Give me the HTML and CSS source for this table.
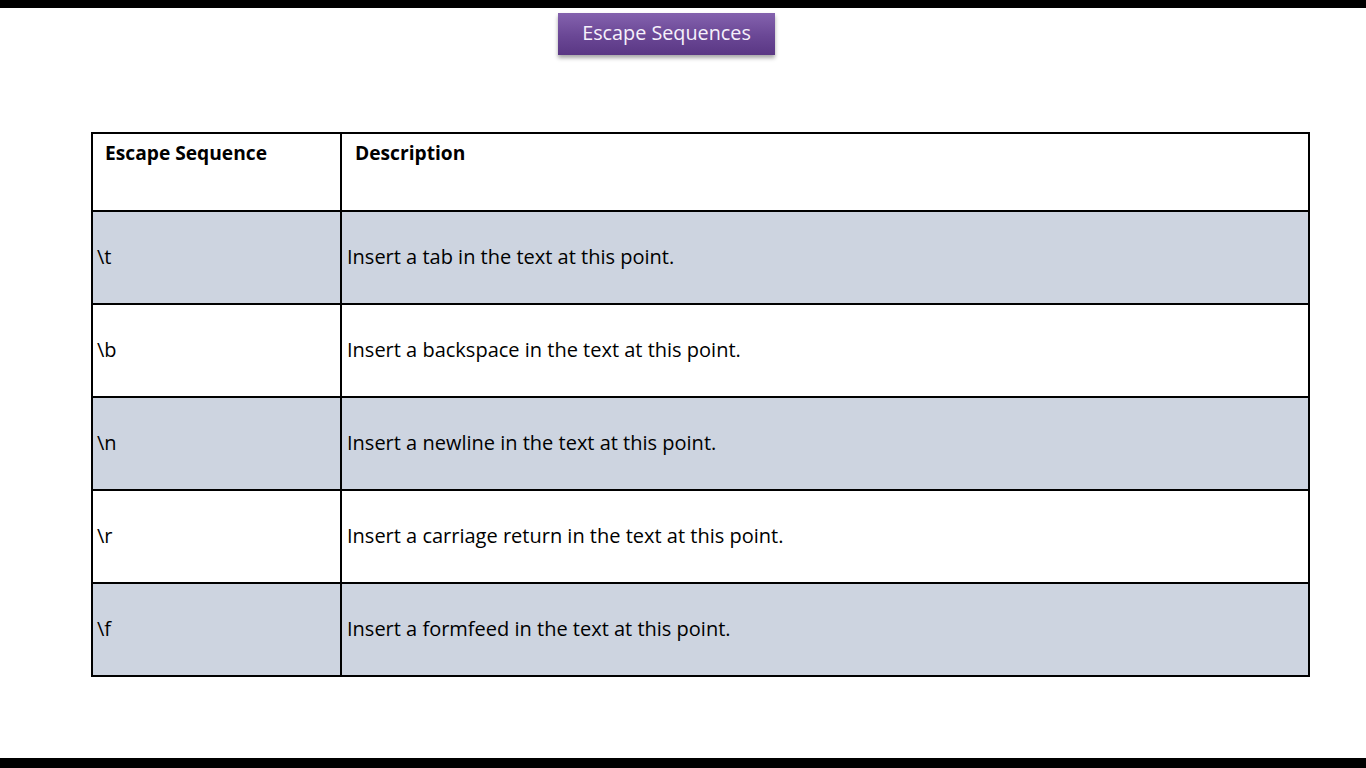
FILE: index.html
```html
<!DOCTYPE html>
<html>
<head>
<meta charset="utf-8">
<link rel="stylesheet" href="styles.css">
</head>
<body>
<div class="page">
  <div class="bar"></div>
  <main class="main">
    <div class="title-row"><div class="title">Escape Sequences</div></div>
    <table class="grid">
      <tr class="head"><th class="c1">Escape Sequence</th><th class="c2">Description</th></tr>
      <tr class="shade"><td>\t</td><td>Insert a tab in the text at this point.</td></tr>
      <tr><td>\b</td><td>Insert a backspace in the text at this point.</td></tr>
      <tr class="shade"><td>\n</td><td>Insert a newline in the text at this point.</td></tr>
      <tr><td>\r</td><td>Insert a carriage return in the text at this point.</td></tr>
      <tr class="shade"><td>\f</td><td>Insert a formfeed in the text at this point.</td></tr>
    </table>
  </main>
  <div class="bar bottom"></div>
</div>
</body>
</html>
```
FILE: styles.css
```css
html, body { margin: 0; padding: 0; background: #fff; }
.page { display: flex; flex-direction: column; height: 768px; font-family: "Open Sans", "Liberation Sans", sans-serif; color: #000; }
.bar { height: 8px; background: #000; flex: none; }
.bar.bottom { height: 10px; margin-top: auto; }
.main { flex: 1; display: flex; flex-direction: column; }
.title-row { display: flex; padding: 5px 0 0 558px; }
.title { width: 217px; height: 42px; box-sizing: border-box; padding-bottom: 3px; display: flex; align-items: center; justify-content: center; color: #f6f1fb; font-size: 19.8px; background: linear-gradient(#8462ae, #6a4795 55%, #5a3784); box-shadow: 0 3px 4px rgba(0,0,0,0.35); }
.grid { margin: 77px 0 0 91px; width: 1219px; border-collapse: collapse; border: 2px solid #000; table-layout: fixed; }
.grid td, .grid th { border: 2px solid #000; font-size: 20px; padding: 0 4px 0 5px; text-align: left; }
.grid .c1 { width: 249px; }
.grid th { font-weight: 700; font-size: 19.2px; vertical-align: top; padding: 5px 12px 0 13px; height: 78px; box-sizing: border-box; }
.grid th.c1 { padding-left: 12px; }
.grid td { height: 93px; box-sizing: border-box; vertical-align: middle; padding-bottom: 2px; }
.grid td:first-child { padding-left: 4px; }
.shade td { background: #cdd4e0; }
```
